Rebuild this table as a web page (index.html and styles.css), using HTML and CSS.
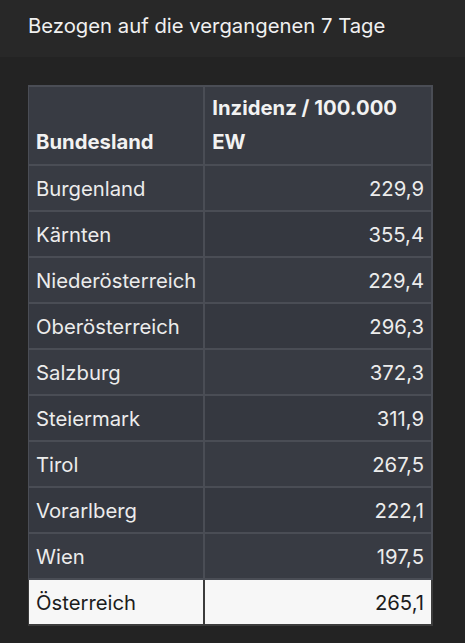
FILE: index.html
```html
<!DOCTYPE html>
<html lang="de">
<head>
    <meta charset="UTF-8">
    <meta name="viewport" content="width=device-width, initial-scale=1.0">
    <title>Inzidenz</title>
    <link rel="stylesheet" href="styles.css">
</head>
<body>
    <!-- Kopfzeile -->
    <header class="topbar">
        <p>Bezogen auf die vergangenen 7 Tage</p>
    </header>

    <div class="content">
        <table class="inzidenz">
            <thead>
                <tr>
                    <th class="land">Bundesland</th>
                    <th class="wert">Inzidenz / 100.000 EW</th>
                </tr>
            </thead>
            <tbody>
                <tr><td>Burgenland</td><td class="num">229,9</td></tr>
                <tr><td>Kärnten</td><td class="num">355,4</td></tr>
                <tr><td>Niederösterreich</td><td class="num">229,4</td></tr>
                <tr><td>Oberösterreich</td><td class="num">296,3</td></tr>
                <tr><td>Salzburg</td><td class="num">372,3</td></tr>
                <tr><td>Steiermark</td><td class="num">311,9</td></tr>
                <tr><td>Tirol</td><td class="num">267,5</td></tr>
                <tr><td>Vorarlberg</td><td class="num">222,1</td></tr>
                <tr><td>Wien</td><td class="num">197,5</td></tr>
                <tr class="gesamt"><td>Österreich</td><td class="num">265,1</td></tr>
            </tbody>
        </table>
    </div>
</body>
</html>
```

FILE: styles.css
```css
body {
    margin: 0;
    padding: 0;
    background-color: #232323;
    color: #ececec;
    font-family: Inter, "Noto Sans", sans-serif;
}

.topbar {
    background-color: #282828;
    height: 57px;
    padding: 0 28px;
    display: flex;
    align-items: center;
}

.topbar p {
    margin: 0 0 6px 0;
    font-size: 20.3px;
    color: #f0f0f0;
}

.content {
    padding: 28px 0 0 28px;
}

.inzidenz {
    width: 405px;
    border-collapse: collapse;
    font-size: 20.3px;
    background-color: #383b43;
    border: 1px solid #4a4d55;
}

.inzidenz th,
.inzidenz td {
    border: 1px solid #4a4d55;
    border-width: 2px 2px 2px 1px;
    padding: 0 7px;
}

.inzidenz th {
    height: 72px;
    text-align: left;
    vertical-align: bottom;
    font-weight: 700;
    line-height: 34px;
    padding-bottom: 5px;
    color: #f2f2f2;
}

.inzidenz th.land {
    width: 159px;
}

.inzidenz td {
    height: 44px;
    color: #ececec;
}

.inzidenz tbody tr:nth-child(even) {
    background-color: #353840;
}

.inzidenz .num {
    text-align: right;
}

.inzidenz tr.gesamt td {
    background-color: #f7f7f7;
    color: #1c1c1c;
    border-color: #3c3c3c;
}
```
